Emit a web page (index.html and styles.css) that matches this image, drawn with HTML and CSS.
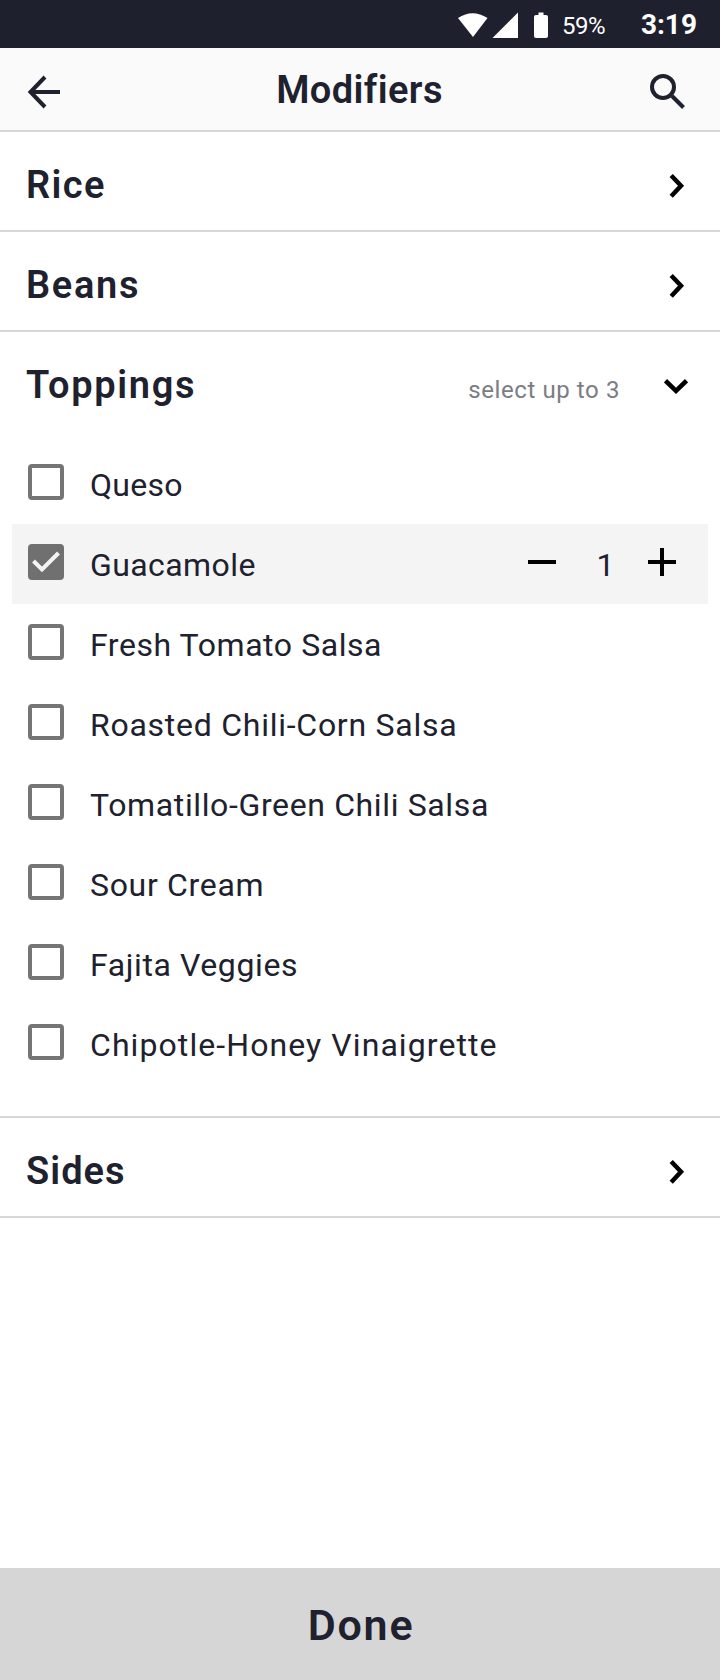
FILE: index.html
```html
<!DOCTYPE html>
<html lang="en">
<head>
<meta charset="utf-8">
<title>Modifiers</title>
<link rel="stylesheet" href="styles.css">
</head>
<body>
<div class="screen">
<div class="status">
<svg class="signals" width="96" height="48" viewBox="456 0 96 48"><path d="M458 18Q472.5 8.500 487.500 18L473 37Z"/><path d="M518 12.500V38H492.500Z"/><path d="M538.500 12.500h5v2.500h2.500q2 0 2 2v19q0 2-2 2h-10q-2 0-2-2v-19q0-2 2-2h2.500z"/></svg>
<span class="percent">59%</span><span class="clock">3:19</span>
</div>
<header class="header">
<svg class="back" width="36" height="36" viewBox="26 74 36 36"><path d="M60 92H31M45 77L30.500 92L45 107"/></svg>
<h1 class="heading title">Modifiers</h1>
<svg class="search" width="40" height="40" viewBox="648 72 40 40"><circle cx="663" cy="87" r="11"/><path d="M672 96L683.500 107.500"/></svg>
</header>
<main class="main">
<section class="group"><h2 class="heading rice">Rice</h2><svg class="chevron" width="24" height="28" viewBox="664 172 24 28"><path d="M671.200 175.500L681 185.800L671.200 196.200"/></svg></section>
<section class="group"><h2 class="heading beans">Beans</h2><svg class="chevron" width="24" height="28" viewBox="664 172 24 28"><path d="M671.200 175.500L681 185.800L671.200 196.200"/></svg></section>
<section class="group open"><h2 class="heading toppings">Toppings</h2><span class="hint">select up to 3</span><svg class="chevron" width="24" height="28" viewBox="664 372 24 28"><path d="M665.500 380.700L676 390.800L686.500 380.700"/></svg></section>
<div class="options">
<div class="option"><i class="box"></i><span class="label queso">Queso</span></div>
<div class="option selected"><i class="box"><svg width="36" height="36" viewBox="28 544 36 36"><path d="M33.500 561L42 569.500L58.500 553"/></svg></i><span class="label guacamole">Guacamole</span>
<div class="stepper"><svg width="28" height="28" viewBox="0 0 28 28"><path d="M0 14H28"/></svg><span class="count">1</span><svg width="28" height="28" viewBox="0 0 28 28"><path d="M0 14H28M14 0V28"/></svg></div></div>
<div class="option"><i class="box"></i><span class="label tomato">Fresh Tomato Salsa</span></div>
<div class="option"><i class="box"></i><span class="label corn">Roasted Chili-Corn Salsa</span></div>
<div class="option"><i class="box"></i><span class="label tomatillo">Tomatillo-Green Chili Salsa</span></div>
<div class="option"><i class="box"></i><span class="label cream">Sour Cream</span></div>
<div class="option"><i class="box"></i><span class="label fajita">Fajita Veggies</span></div>
<div class="option"><i class="box"></i><span class="label chipotle">Chipotle-Honey Vinaigrette</span></div>
</div>
<section class="group"><h2 class="heading sides">Sides</h2><svg class="chevron" width="24" height="28" viewBox="664 172 24 28"><path d="M671.200 175.500L681 185.800L671.200 196.200"/></svg></section>
</main>
<footer class="done">Done</footer>
</div>
</body>
</html>
```
FILE: styles.css
```css
* { box-sizing: border-box; }
body { margin: 0; background: #fff; color: #20212e; font-family: Roboto, "Liberation Sans", sans-serif; }
.screen { height: 1680px; display: flex; flex-direction: column; }
.status { height: 48px; background: #1f202d; color: #fff; display: flex; align-items: center; padding: 0 23px 0 456px; }
.signals { fill: #fff; flex: none; }
.percent { font-size: 24px; line-height: 28px; margin: 4px 0 0 10px; letter-spacing: -.5px; }
.clock { font-size: 28px; line-height: 32px; font-weight: 700; margin: 2px 0 0 auto; }
.header { height: 84px; background: #fafafa; border-bottom: 2px solid #d6d6d6; display: flex; align-items: center; justify-content: space-between; padding: 0 32px 0 26px; }
.header svg { fill: none; stroke: #20212e; stroke-width: 4; }
.back, .search { margin-top: 6px; }
.heading { margin: 0; font-size: 38px; line-height: 44px; font-weight: 600; }
.title { letter-spacing: .4px; padding: 2px 0 0 9px; }
.main { flex: 1; }
.group { height: 100px; border-bottom: 2px solid #d6d6d6; padding: 10px 32px 0 26px; display: flex; align-items: center; }
.group .heading { margin-top: -2px; }
.rice { letter-spacing: 1.35px; }
.beans { letter-spacing: 1.7px; }
.toppings { letter-spacing: 1.65px; }
.sides { letter-spacing: 1.05px; }
.chevron { margin-left: auto; fill: none; stroke: #000; stroke-width: 4.5; }
.open { border: 0; height: 112px; padding-bottom: 14px; }
.hint { margin-left: auto; font-size: 24px; line-height: 28px; letter-spacing: .6px; color: #7c7c84; padding-top: 8px; }
.open .chevron { margin-left: 44px; }
.options { padding-bottom: 32px; border-bottom: 2px solid #d6d6d6; }
.option { height: 80px; margin: 0 12px; padding: 0 32px 0 16px; display: flex; align-items: center; }
.box { width: 36px; height: 36px; border: 4px solid #757575; border-radius: 4px; margin: -4px 26px 0 0; flex: none; }
.label, .count { font-size: 32px; line-height: 38px; padding-top: 2px; }
.queso { letter-spacing: .3px; }
.guacamole { letter-spacing: .42px; }
.tomato { letter-spacing: .56px; }
.corn { letter-spacing: .74px; }
.tomatillo { letter-spacing: .63px; }
.cream { letter-spacing: .67px; }
.fajita { letter-spacing: .6px; }
.chipotle { letter-spacing: 1.08px; }
.count { padding-left: 7px; }
.selected { background: #f4f4f4; }
.selected .box { border: 0; background: #707070; }
.box svg { display: block; fill: none; stroke: #f4f4f4; stroke-width: 4; }
.stepper { margin-left: auto; width: 148px; display: flex; align-items: center; justify-content: space-between; }
.stepper svg { fill: none; stroke: #000; stroke-width: 4; margin-top: -4px; }
.done { height: 112px; background: #d6d6d6; font-size: 43px; font-weight: 600; line-height: 50px; letter-spacing: 1.8px; padding: 2px 0 0 2px; display: flex; align-items: center; justify-content: center; }
```
